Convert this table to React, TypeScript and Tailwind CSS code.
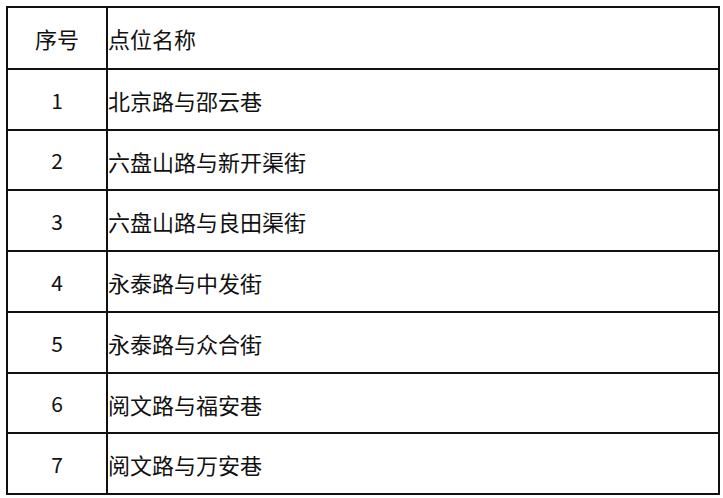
const rows: [string, string][] = [
  ["1", "北京路与邵云巷"],
  ["2", "六盘山路与新开渠街"],
  ["3", "六盘山路与良田渠街"],
  ["4", "永泰路与中发街"],
  ["5", "永泰路与众合街"],
  ["6", "阅文路与福安巷"],
  ["7", "阅文路与万安巷"],
];

const heights = ["h-[61px]", "h-[60px]", "h-[61px]", "h-[61px]", "h-[61px]", "h-[60px]", "h-[59px]"];

export default function App() {
  return (
    <div className="w-[723px] h-[498px] bg-white pt-[6px] pl-[6px] text-[#111]" style={{ fontFamily: '"Noto Sans CJK SC", "Liberation Sans", sans-serif' }}>
      <div className="w-[714px] border-2 border-[#111] flex flex-col">
        <div className="flex h-[62px] border-b-2 border-[#111] text-[22px]">
          <div className="w-[100px] border-r-2 border-[#111] flex items-center justify-center">序号</div>
          <div className="flex-1 flex items-center">点位名称</div>
        </div>
        {rows.map(([n, name], i) => (
          <div
            key={n}
            className={`flex ${heights[i]} ${i < rows.length - 1 ? "border-b-2 border-[#111]" : ""}`}
          >
            <div className="w-[100px] border-r-2 border-[#111] flex items-center justify-center pt-[2px] text-[21px]">
              {n}
            </div>
            <div className="flex-1 flex items-center pt-[2px] text-[22px]">{name}</div>
          </div>
        ))}
      </div>
    </div>
  );
}
